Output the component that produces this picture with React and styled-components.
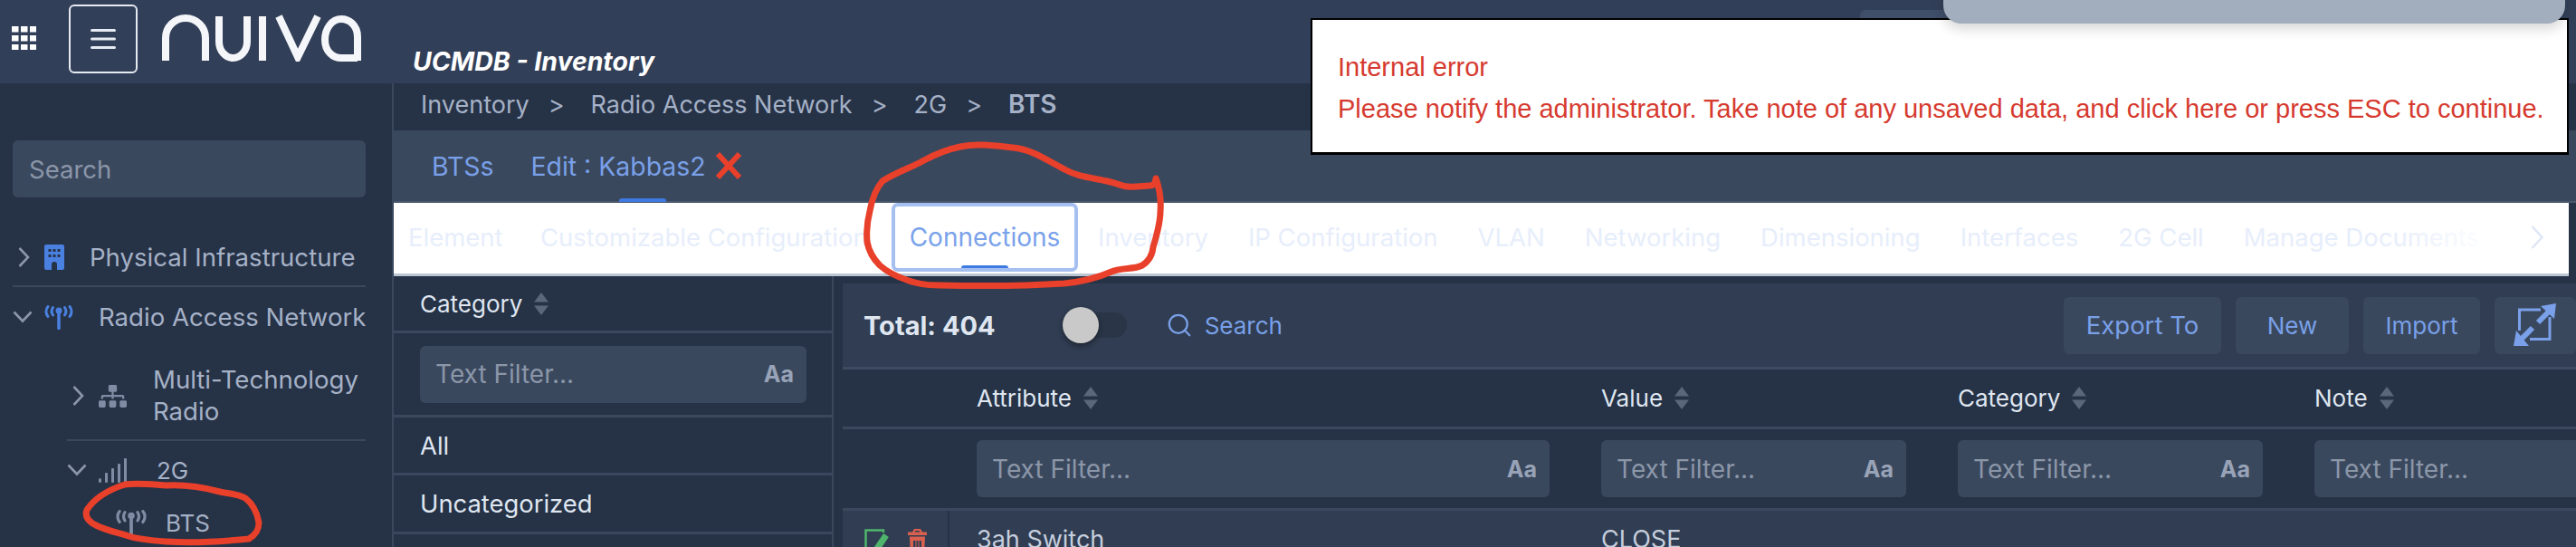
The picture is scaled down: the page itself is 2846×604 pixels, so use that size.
import React from 'react'
import styled, { createGlobalStyle } from 'styled-components'
import { FaSitemap } from 'react-icons/fa'
import { Search as SearchIcon } from 'lucide-react'

const GlobalStyle = createGlobalStyle`
  html, body {
    margin: 0;
    padding: 0;
    width: 2846px;
    height: 604px;
    overflow: hidden;
    background: #263246;
  }
  * { box-sizing: border-box; }
  body { font-family: Inter, "Noto Sans", sans-serif; }
`

const Page = styled.div`
  position: relative;
  width: 2846px;
  height: 604px;
  overflow: hidden;
  display: flex;
  flex-direction: column;
  font-size: 26px;
`

const Header = styled.header`
  height: 92px;
  flex: none;
  display: flex;
  align-items: flex-start;
  background: #323f58;
`
const GridDots = styled.svg`
  width: 27px;
  height: 26px;
  margin: 29px 0 0 13px;
`
const MenuButton = styled.button`
  width: 76px;
  height: 76px;
  margin: 5px 0 0 36px;
  padding: 0;
  background: transparent;
  border: 2px solid #e6ebf3;
  border-radius: 6px;
  display: flex;
  align-items: center;
  justify-content: center;
`
const Logo = styled.svg`
  width: 222px;
  height: 52px;
  margin: 16px 0 0 26px;
  flex: none;
`
const Title = styled.h1`
  margin: 51px 0 0 56px;
  font-size: 28.4px;
  line-height: 34px;
  font-weight: 700;
  font-style: italic;
  color: #fff;
  white-space: nowrap;
`
const HeaderChip = styled.div`
  width: 130px;
  height: 50px;
  margin: 11px 0 0 1332px;
  border-radius: 6px;
  background: #3f4e69;
`

const Body = styled.div`
  flex: 1;
  min-height: 0;
  display: flex;
`

const Sidebar = styled.aside`
  width: 433px;
  flex: none;
  background: #263246;
  padding-top: 63px;
  overflow: hidden;
`
const SideSearch = styled.div`
  height: 63px;
  margin: 0 29px 35px 14px;
  padding-left: 18px;
  display: flex;
  align-items: center;
  border-radius: 6px;
  background: #3a485e;
  color: #8b96a8;
  font-size: 27.5px;
`
const TreeRow = styled.div`
  display: flex;
  align-items: center;
  height: ${p => p.$height}px;
  margin: 0 29px 0 ${p => p.$indent}px;
  padding-top: ${p => p.$top || 0}px;
  color: #a5b1c6;
  font-size: ${p => p.$size || 27.6}px;
  line-height: 35px;
  white-space: nowrap;
  border-bottom: ${p => (p.$divider ? '2px solid #3a485e' : 'none')};
`
const ChevronSlot = styled.div`
  width: 35px;
  flex: none;
  display: flex;
  align-items: center;
  padding-left: ${p => p.$pad || 0}px;
`
const IconSlot = styled.div`
  width: ${p => p.$width}px;
  flex: none;
  display: flex;
  align-items: center;
  color: ${p => p.$color || '#7f8ca3'};
`

const Main = styled.main`
  flex: 1;
  min-width: 0;
  display: flex;
  flex-direction: column;
  border-left: 2px solid #3a485e;
`
const Crumbs = styled.nav`
  height: 52px;
  flex: none;
  display: flex;
  align-items: center;
  padding: 0 0 6px 30px;
  background: #263246;
  color: #a5b1c6;
  font-size: 27px;
  white-space: nowrap;
`
const CrumbSep = styled.span`
  margin: 0 29px 0 21px;
`
const CrumbLast = styled.span`
  font-weight: 600;
  font-size: 28px;
`
const TabBar = styled.div`
  height: 80px;
  flex: none;
  display: flex;
  padding-left: 42px;
  gap: 41px;
  background: #3a485e;
  border-bottom: 2px solid #4a586e;
  font-size: 28.4px;
`
const BarTab = styled.div`
  position: relative;
  display: flex;
  align-items: center;
  color: #79a0e8;
  &::after {
    content: ${p => (p.$active ? '""' : 'none')};
    position: absolute;
    left: 50%;
    bottom: -1px;
    width: 52px;
    height: 4px;
    margin-left: -26px;
    border-radius: 3px 3px 0 0;
    background: #3f7ae0;
  }
`
const CloseMark = styled.svg`
  width: 30px;
  height: 30px;
  margin: 0 13px 0 10px;
`
const SubTabs = styled.div`
  position: relative;
  height: 81px;
  flex: none;
  width: 2403px;
  display: flex;
  align-items: center;
  padding: 0 0 3px 0;
  background: #fff;
  border-bottom: 3px solid #bcc5d3;
  overflow: hidden;
  white-space: nowrap;
  font-size: 27.5px;
  &::after {
    content: "";
    position: absolute;
    top: 0;
    bottom: 0;
    right: 60px;
    width: 130px;
    background: linear-gradient(90deg, rgba(255, 255, 255, 0), #fff 85%);
  }
`
const SubTab = styled.div`
  position: relative;
  height: 76px;
  flex: none;
  width: ${p => (p.$width ? `${p.$width}px` : 'auto')};
  overflow: hidden;
  display: flex;
  align-items: center;
  padding: 0 22px;
  color: #e7eefb;
  ${p => p.$lead && 'margin-left: -6px;'}
  ${p => p.$active && `
    padding: 0 16px;
    justify-content: center;
    color: #7aa2ea;
    font-size: 28px;
    border: 4px solid #a5bff0;
    border-radius: 7px;
    &::after {
      content: "";
      position: absolute;
      left: 50%;
      bottom: -1px;
      width: 52px;
      height: 4px;
      margin-left: -26px;
      border-radius: 3px 3px 0 0;
      background: #3f7ae0;
    }
  `}
`
const TabsNext = styled.svg`
  position: absolute;
  z-index: 1;
  right: 28px;
  top: 25px;
  width: 14px;
  height: 26px;
`

const Content = styled.div`
  flex: 1;
  min-height: 0;
  display: flex;
`
const CategoryPanel = styled.section`
  width: 486px;
  flex: none;
  border-right: 2px solid #3a485e;
  background: #263246;
`
const CategoryRow = styled.div`
  height: ${p => p.$height}px;
  display: flex;
  align-items: center;
  padding: 0 28px 0 29px;
  color: #dfe6f0;
  font-size: ${p => p.$size || 27.4}px;
  border-bottom: 3px solid #3a485e;
`
const Filter = styled.div`
  width: 100%;
  height: 63px;
  display: flex;
  align-items: center;
  justify-content: space-between;
  padding: 0 14px 0 17px;
  border-radius: 6px;
  background: #3a485e;
  color: #8b96a8;
  font-size: 28px;
`
const CaseToggle = styled.span`
  font-weight: 700;
  font-size: 25px;
  color: #98a3b7;
`
const SortMark = styled.svg`
  width: 18px;
  height: 25px;
  margin-left: 12px;
  flex: none;
`

const TablePanel = styled.section`
  flex: 1;
  min-width: 0;
  margin: 8px 0 0 10px;
  overflow: hidden;
  background: #263246;
`
const Toolbar = styled.div`
  height: 95px;
  display: flex;
  align-items: center;
  padding-left: 23px;
  background: #303d52;
  border-bottom: 3px solid #3d4b62;
`
const Total = styled.div`
  font-weight: 700;
  font-size: 29px;
  color: #dfe6f0;
  white-space: nowrap;
`
const Switch = styled.div`
  position: relative;
  width: 71px;
  height: 28px;
  margin-left: 74px;
  border-radius: 14px;
  background: #2a3648;
`
const Knob = styled.div`
  position: absolute;
  left: 0;
  top: -6px;
  width: 40px;
  height: 40px;
  border-radius: 50%;
  background: #c9c9c9;
  box-shadow: 0 3px 6px rgba(0, 0, 0, 0.4);
`
const SearchLink = styled.div`
  display: flex;
  align-items: center;
  gap: 13px;
  margin-left: 43px;
  color: #79a0e8;
`
const ToolActions = styled.div`
  margin-left: auto;
  display: flex;
  gap: 16px;
`
const ToolButton = styled.button`
  height: 63px;
  width: ${p => p.$width}px;
  padding: 0;
  flex: none;
  display: flex;
  align-items: center;
  justify-content: center;
  border: 0;
  border-radius: 6px;
  background: #3a485e;
  color: #79a0e8;
  font: inherit;
  font-size: ${p => p.$size || 26}px;
`
const GridRow = styled.div`
  display: grid;
  grid-template-columns: 118px 690px 394px 394px 394px;
  height: ${p => p.$height}px;
  background: ${p => p.$bg || 'transparent'};
  border-bottom: ${p => (p.$line ? '3px solid #3a485e' : 'none')};
`
const HeadCell = styled.div`
  display: flex;
  align-items: center;
  padding-left: 30px;
  color: #dfe6f0;
  &:first-child { border-right: 2px solid #263246; }
`
const FilterCell = styled.div`
  display: flex;
  align-items: center;
  padding: 0 27px 0 30px;
`
const DataCell = styled.div`
  padding: 16px 0 0 30px;
  line-height: 32px;
  font-size: 27px;
  color: #c5cedd;
  white-space: nowrap;
`
const ActionCell = styled.div`
  display: flex;
  align-items: flex-start;
  gap: 20px;
  padding: 20px 0 0 24px;
  border-right: 2px solid #263246;
`

const ErrorBox = styled.div`
  position: absolute;
  z-index: 5;
  left: 1448px;
  top: 20px;
  width: 1390px;
  height: 151px;
  padding: 4px 28px 0;
  display: flex;
  flex-direction: column;
  justify-content: center;
  gap: 14px;
  background: #fff;
  border: 2px solid #000;
  border-bottom-width: 3px;
  color: #d63a2f;
  font-family: "Liberation Sans", Arial, sans-serif;
  font-size: 29px;
  line-height: 32px;
  white-space: nowrap;
`
const TopSheet = styled.div`
  position: absolute;
  z-index: 6;
  left: 2147px;
  top: -10px;
  width: 687px;
  height: 36px;
  background: #a2adbd;
  border-radius: 0 0 20px 20px;
  box-shadow: 0 6px 14px rgba(0, 0, 0, 0.16);
`
const Scribble = styled.svg`
  position: absolute;
  z-index: 4;
  left: 0;
  top: 0;
  width: 2846px;
  height: 604px;
  pointer-events: none;
`

const Chevron = ({ open }) => open ? (
  <svg width="22" height="14" viewBox="0 0 22 14" fill="none" stroke="#8b96a8" strokeWidth="2.6">
    <path d="M1.5 1.5 11 11.5 20.5 1.5" />
  </svg>
) : (
  <svg width="13" height="22" viewBox="0 0 13 22" fill="none" stroke="#8b96a8" strokeWidth="2.6">
    <path d="M1.5 1 11 11 1.5 21" />
  </svg>
)

const Building = () => (
  <svg width="22" height="28" viewBox="0 0 22 28">
    <path fillRule="evenodd" fill="#4a80e0" d="M2 0H20A2 2 0 0 1 22 2V26A2 2 0 0 1 20 28H14V22A3 3 0 0 0 8 22V28H2A2 2 0 0 1 0 26V2A2 2 0 0 1 2 0Z" />
    <g fill="#263246">
      {[5, 11].map(y => [4.5, 9.5, 14.5].map(x => (
        <rect key={`${x}-${y}`} x={x} y={y} width="3" height="3" rx="0.5" />
      )))}
    </g>
  </svg>
)

const Antenna = ({ width = 32, height = 27 }) => (
  <svg width={width} height={height} viewBox="0 0 32 27" fill="none" stroke="currentColor" strokeWidth="3" strokeLinecap="round">
    <circle cx="16" cy="6" r="3.5" fill="currentColor" stroke="none" />
    <path d="M16 7V25.500" strokeWidth="3.500" />
    <path d="M9.500 2.500C7.800 5 7.800 8.500 9.500 11M22.500 2.500C24.200 5 24.200 8.500 22.500 11" />
    <path d="M4 1.500C1.300 4.500 1.300 9.500 4 12.500M28 1.500C30.700 4.500 30.700 9.500 28 12.500" />
  </svg>
)

const SignalBars = () => (
  <svg width="32" height="27" viewBox="0 0 32 27" fill="#7f8ca3">
    <rect x="0" y="22" width="3" height="5" rx="1.5" />
    <rect x="7" y="16" width="3" height="11" rx="1" />
    <rect x="14" y="11" width="3" height="16" rx="1" />
    <rect x="21" y="6" width="3" height="21" rx="1" />
    <rect x="28" y="0" width="3" height="27" rx="1" />
  </svg>
)

const Expand = () => (
  <svg width="48" height="48" viewBox="0 0 48 48" fill="none" stroke="#79a0e8">
    <path d="M30 7H6.500V30M18 39.500H40V15" strokeWidth="3" />
    <path d="M27 21 39 9M21 27 9 39" strokeWidth="6" />
    <path d="M30 3 47 0 45 17ZM17 47 0 47 3 30Z" fill="#79a0e8" stroke="none" />
  </svg>
)

const EditIcon = () => (
  <svg width="28" height="30" viewBox="0 0 28 30" fill="none" stroke="#4fb56c" strokeWidth="2.500">
    <path d="M21 4V1.500H1.500V30" />
    <path d="M9 29 24 7" strokeWidth="7" />
  </svg>
)

const TrashIcon = () => (
  <svg width="21" height="30" viewBox="0 0 21 30" fill="#d9604f">
    <path fillRule="evenodd" d="M7 0H14L16 3.500H21V7H0V3.500H5ZM8.500 2 7.500 3.500H13.500L12.500 2Z" />
    <path fillRule="evenodd" d="M2 8.500H19L18 30H3ZM6 13V30H8.500V13ZM9.500 13V30H11.500V13ZM12.500 13V30H15V13Z" />
  </svg>
)

const Sort = () => (
  <SortMark viewBox="0 0 18 25" fill="#5a6679">
    <path d="M9 0 17 10.500H1ZM9 25 1 14.500H17Z" />
  </SortMark>
)

const TextFilter = ({ noCase }) => (
  <Filter>
    <span>Text Filter...</span>
    {!noCase && <CaseToggle>Aa</CaseToggle>}
  </Filter>
)

const subTabs = ['Inventory', 'IP Configuration', 'VLAN', 'Networking', 'Dimensioning', 'Interfaces', '2G Cell', 'Manage Documents']
const columns = ['Attribute', 'Value', 'Category', 'Note']

export default function App() {
  return (
    <Page>
      <GlobalStyle />
      <Header>
        <GridDots viewBox="0 0 27 26" fill="#fff">
          {[0, 10, 20].map(y => [0, 10, 20].map(x => (
            <rect key={`${x}-${y}`} x={x} y={y} width="7.500" height="6.500" />
          )))}
        </GridDots>
        <MenuButton aria-label="Menu">
          <svg width="28" height="22" viewBox="0 0 28 22" fill="#e6ebf3">
            <rect y="0" width="28" height="3" rx="1.500" />
            <rect y="9.500" width="28" height="3" rx="1.500" />
            <rect y="19" width="28" height="3" rx="1.500" />
          </svg>
        </MenuButton>
        <Logo viewBox="0 0 222 52" fill="none" stroke="#f4f6f9" strokeWidth="8">
          <path d="M5 51V26A22 22 0 0 1 49 26V51" />
          <path d="M64 2V30A15.500 18 0 0 0 95 30V2" />
          <path d="M112 2V51" />
          <path d="M130 2 151 47 173 2" />
          <path d="M217 51V25C217 11 207 5 199 5 189 5 181 15 181 28 181 41 190 48 199 48H217" />
        </Logo>
        <Title>UCMDB - Inventory</Title>
        <HeaderChip />
      </Header>
      <Body>
        <Sidebar>
          <SideSearch>Search</SideSearch>
          <TreeRow $height={64} $indent={14} $divider>
            <ChevronSlot $pad={6}><Chevron /></ChevronSlot>
            <IconSlot $width={50}><Building /></IconSlot>
            Physical Infrastructure
          </TreeRow>
          <TreeRow $height={66} $indent={14}>
            <ChevronSlot><Chevron open /></ChevronSlot>
            <IconSlot $width={60} $color="#4a80e0"><Antenna /></IconSlot>
            Radio Access Network
          </TreeRow>
          <TreeRow $height={104} $indent={74} $top={6} $divider>
            <ChevronSlot $pad={6}><Chevron /></ChevronSlot>
            <IconSlot $width={60}><FaSitemap size={31} /></IconSlot>
            <span>Multi-Technology<br />Radio</span>
          </TreeRow>
          <TreeRow $height={64} $indent={74} $size={26}>
            <ChevronSlot><Chevron open /></ChevronSlot>
            <IconSlot $width={64}><SignalBars /></IconSlot>
            2G
          </TreeRow>
          <TreeRow $height={52} $indent={127} $size={26}>
            <IconSlot $width={56}><Antenna width={36} height={29} /></IconSlot>
            BTS
          </TreeRow>
        </Sidebar>
        <Main>
          <Crumbs>
            Inventory<CrumbSep>&gt;</CrumbSep>
            Radio Access Network<CrumbSep>&gt;</CrumbSep>
            2G<CrumbSep>&gt;</CrumbSep>
            <CrumbLast>BTS</CrumbLast>
          </Crumbs>
          <TabBar>
            <BarTab>BTSs</BarTab>
            <BarTab $active>
              Edit : Kabbas2
              <CloseMark viewBox="0 0 30 30" fill="none" stroke="#e8402a" strokeWidth="6">
                <path d="M3 2 27 28M27 2 3 28" />
              </CloseMark>
            </BarTab>
          </TabBar>
          <SubTabs>
            <SubTab $lead $width={146}>Element</SubTab>
            <SubTab $width={410}>Customizable Configuration</SubTab>
            <SubTab $active $width={206}>Connections</SubTab>
            {subTabs.map(t => <SubTab key={t}>{t}</SubTab>)}
            <TabsNext viewBox="0 0 14 26" fill="none" stroke="#dfe7f6" strokeWidth="2.500">
              <path d="M1.500 1 12.500 13 1.500 25" />
            </TabsNext>
          </SubTabs>
          <Content>
            <CategoryPanel>
              <CategoryRow $height={63} $size={26}>Category<Sort /></CategoryRow>
              <CategoryRow $height={93}><TextFilter /></CategoryRow>
              <CategoryRow $height={64}>All</CategoryRow>
              <CategoryRow $height={65}>Uncategorized</CategoryRow>
            </CategoryPanel>
            <TablePanel>
              <Toolbar>
                <Total>Total: 404</Total>
                <Switch><Knob /></Switch>
                <SearchLink><SearchIcon size={30} strokeWidth={1.800} />Search</SearchLink>
                <ToolActions>
                  <ToolButton $width={174} $size={27.5}>Export To</ToolButton>
                  <ToolButton $width={125}>New</ToolButton>
                  <ToolButton $width={129}>Import</ToolButton>
                  <ToolButton $width={90}><Expand /></ToolButton>
                </ToolActions>
              </Toolbar>
              <GridRow $height={66} $line>
                <HeadCell />
                {columns.map(c => <HeadCell key={c}>{c}<Sort /></HeadCell>)}
              </GridRow>
              <GridRow $height={90} $line>
                <div />
                <FilterCell><TextFilter /></FilterCell>
                <FilterCell><TextFilter /></FilterCell>
                <FilterCell><TextFilter /></FilterCell>
                <FilterCell><TextFilter noCase /></FilterCell>
              </GridRow>
              <GridRow $height={60} $bg="#303d52">
                <ActionCell>
                  <EditIcon />
                  <TrashIcon />
                </ActionCell>
                <DataCell>3ah Switch</DataCell>
                <DataCell>CLOSE</DataCell>
              </GridRow>
            </TablePanel>
          </Content>
        </Main>
      </Body>
      <TopSheet />
      <ErrorBox>
        <div>Internal error</div>
        <div>Please notify the administrator. Take note of any unsaved data, and click here or press ESC to continue.</div>
      </ErrorBox>
      <Scribble viewBox="0 0 2846 604" fill="none" stroke="#e8402a" strokeWidth="7" strokeLinejoin="round" strokeLinecap="round">
        <path d="M1277 197C1276 203 1275 205 1270 205 1255 206 1246 208 1234 203 1214 196 1196 198 1176 187 1155 176 1140 165 1119 163 1100 161 1080 158 1061 162 1046 165 1034 170 1021 177 1005 186 990 190 975 200 966 210 963 222 961 233 958 245 957 255 958 267 960 278 965 286 972 293 982 302 992 306 1004 310 1015 314 1026 315 1038 315 1084 316 1130 316 1176 313 1196 311 1212 307 1228 300 1240 295 1252 298 1262 293 1270 288 1273 282 1274 273 1278 259 1282 247 1282 233 1283 220 1281 208 1277 197Z" />
        <path d="M138 535C122 540 106 548 96 563 93 571 98 576 106 580 118 586 130 588 142 592 155 596 170 597 184 598 214 600 245 598 275 595 283 590 286 585 286 577 284 566 279 556 271 550 262 545 252 545 243 543 224 538 204 535 184 536 168 535 152 533 138 535Z" />
      </Scribble>
    </Page>
  )
}
